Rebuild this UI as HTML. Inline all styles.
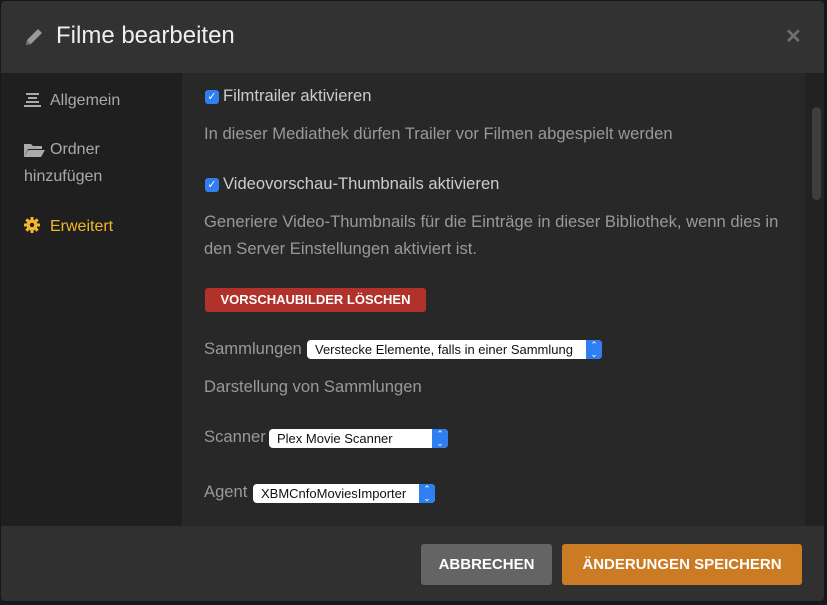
<!DOCTYPE html>
<html><head><meta charset="utf-8"><style>
*{margin:0;padding:0;box-sizing:border-box}
body{width:827px;height:605px;background:#15181c;font-family:"Liberation Sans",sans-serif;position:relative;overflow:hidden}
.dlg{position:absolute;left:1px;top:1px;width:823px;height:600px;background:#2b2b2b;border-radius:4px;overflow:hidden}
.hdr{position:absolute;left:0;top:0;width:100%;height:72px;background:#323232}
.hdr h1{position:absolute;left:55px;top:21px;font-size:24px;font-weight:normal;color:#eee}
.x{position:absolute;left:784px;top:23px;color:#6f6f6f;font-size:20px;font-weight:bold}
.side{position:absolute;left:0;top:72px;width:181px;height:453px;background:#1f1f1f}
.side div{position:absolute;left:23px;font-size:16px;color:#aaa;line-height:27px}
.main{position:absolute;left:181px;top:72px;width:642px;height:453px;background:#282828}
.track{position:absolute;left:804px;top:72px;width:19px;height:453px;background:#222}
.thumb{position:absolute;left:811px;top:106px;width:9px;height:93px;background:#3e3e3e;border-radius:5px}
.t{position:absolute;font-size:16.6px;color:#999;white-space:nowrap}
.tw{color:#ccc}
.cb{position:absolute;width:14px;height:14px;background:#2f7ff0;border-radius:3px;color:#fff;font-size:11px;line-height:14px;text-align:center}
.btnr{position:absolute;left:204px;top:287px;width:221px;height:24px;background:#b0322a;border-radius:3px;color:#fff;font-weight:bold;font-size:13px;text-align:center;line-height:24px}
.sel{position:absolute;height:19px;background:#fff;border-radius:4px;font-size:13px;color:#111;line-height:19px;padding-left:8px}
.sel i{position:absolute;right:0;top:0;width:16px;height:19px;background:#2f7ff0;border-radius:0 4px 4px 0;color:#fff;font-style:normal;font-size:9px;text-align:center;line-height:9px;padding-top:1px}
.foot{position:absolute;left:0;top:525px;width:100%;height:75px;background:#303030}
.b{position:absolute;top:543px;height:41px;border-radius:3px;color:#fff;font-weight:bold;font-size:15px;text-align:center;line-height:41px}
</style></head><body>
<div class="dlg">
<div class="hdr">
<svg style="position:absolute;left:22px;top:25px" width="22" height="22" viewBox="0 0 22 22"><path d="M3 19 L4 14 L15 3 L19 7 L8 18 Z" fill="#999"/><path d="M3 19 L4 14 L8 18Z" fill="#777"/></svg>
<h1>Filme bearbeiten</h1>
<div class="x">✕</div>
</div>
<div class="side">
<svg style="position:absolute;left:23px;top:20px" width="17" height="14"><rect x="2" y="0" width="13" height="2" fill="#aaa"/><rect x="4" y="4" width="9" height="2" fill="#aaa"/><rect x="2" y="8" width="13" height="2" fill="#aaa"/><rect x="0" y="12" width="17" height="2" fill="#aaa"/></svg>
<div style="left:49px;top:14px">Allgemein</div>
<svg style="position:absolute;left:23px;top:69px" width="21" height="15"><path d="M0 2h7l2 2h9v3H4L0 15z" fill="#aaa"/><path d="M4 8h17l-4 7H0z" fill="#aaa"/></svg>
<div style="left:49px;top:63px">Ordner</div>
<div style="top:90px">hinzufügen</div>
<svg style="position:absolute;left:23px;top:144px" width="16" height="16" viewBox="0 0 16 16"><circle cx="8" cy="8" r="5.5" fill="#f0b82c"/><g stroke="#f0b82c" stroke-width="3"><line x1="8" y1="0" x2="8" y2="16"/><line x1="0" y1="8" x2="16" y2="8"/><line x1="2.3" y1="2.3" x2="13.7" y2="13.7"/><line x1="13.7" y1="2.3" x2="2.3" y2="13.7"/></g><circle cx="8" cy="8" r="2.2" fill="#1f1f1f"/></svg>
<div style="left:49px;top:140px;color:#f0b82c">Erweitert</div>
</div>
<div class="main"></div>
<div class="track"></div><div class="thumb"></div>
<div class="cb" style="left:204px;top:89px">✓</div>
<div class="t tw" style="left:222px;top:85px">Filmtrailer aktivieren</div>
<div class="t" style="left:203px;top:123px">In dieser Mediathek dürfen Trailer vor Filmen abgespielt werden</div>
<div class="cb" style="left:204px;top:177px">✓</div>
<div class="t tw" style="left:222px;top:173px">Videovorschau-Thumbnails aktivieren</div>
<div class="t" style="left:203px;top:211px">Generiere Video-Thumbnails für die Einträge in dieser Bibliothek, wenn dies in</div>
<div class="t" style="left:203px;top:238px">den Server Einstellungen aktiviert ist.</div>
<div class="btnr">VORSCHAUBILDER LÖSCHEN</div>
<div class="t" style="left:203px;top:338px">Sammlungen</div>
<div class="sel" style="left:306px;top:339px;width:295px">Verstecke Elemente, falls in einer Sammlung<i>⌃<br>⌄</i></div>
<div class="t" style="left:203px;top:376px">Darstellung von Sammlungen</div>
<div class="t" style="left:203px;top:426px">Scanner</div>
<div class="sel" style="left:268px;top:428px;width:179px">Plex Movie Scanner<i>⌃<br>⌄</i></div>
<div class="t" style="left:203px;top:481px">Agent</div>
<div class="sel" style="left:252px;top:483px;width:182px">XBMCnfoMoviesImporter<i>⌃<br>⌄</i></div>
<div class="foot"></div>
<div class="b" style="left:420px;width:131px;background:#646464">ABBRECHEN</div>
<div class="b" style="left:561px;width:240px;background:#cc7b25">ÄNDERUNGEN SPEICHERN</div>
</div>
</body></html>
